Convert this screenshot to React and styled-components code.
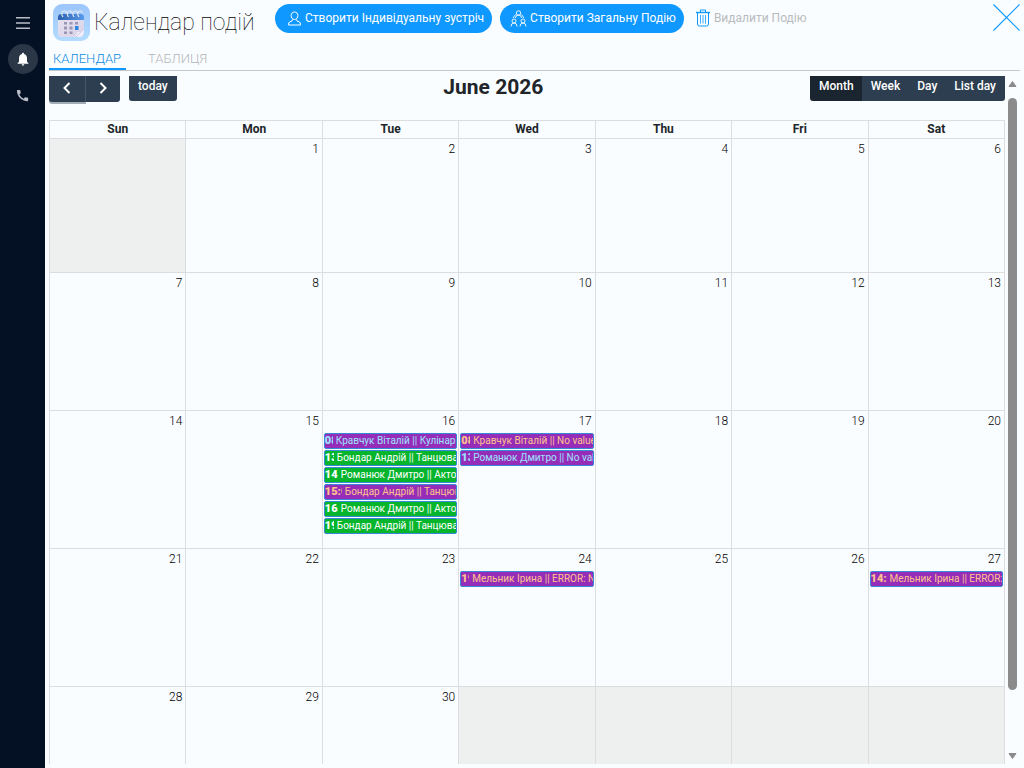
import { useState } from 'react';
import styled, { createGlobalStyle } from 'styled-components';

const GlobalStyle = createGlobalStyle`
  *, *::before, *::after {
    box-sizing: border-box;
  }

  body {
    margin: 0;
    background-color: #fafdff;
    color: #212529;
    font-family: Roboto, 'Liberation Sans', sans-serif;
    font-size: 12px;
  }

  button {
    border: none;
    padding: 0;
    background: none;
    font-family: inherit;
    cursor: pointer;
  }
`;

const Layout = styled.div`
  display: flex;
  height: 100vh;
  overflow: hidden;
`;

const Sidebar = styled.nav`
  display: flex;
  flex-direction: column;
  align-items: center;
  flex: 0 0 45px;
  gap: 6px;
  padding-top: 8px;
  background-color: #041125;
`;

const SideButton = styled.button`
  display: flex;
  align-items: center;
  justify-content: center;
  width: 30px;
  height: 30px;
  border-radius: 50%;
  color: ${({ $active }) => ($active ? '#ffffff' : '#b9bec6')};
  background-color: ${({ $active }) => ($active ? '#2b3646' : 'transparent')};
`;

const Main = styled.main`
  display: flex;
  flex-direction: column;
  flex: 1;
  min-width: 0;
  padding: 0 4px 4px;
`;

const Header = styled.header`
  display: flex;
  align-items: flex-start;
  height: 44px;
  padding: 4px 0 0 4px;
`;

const Brand = styled.div`
  display: flex;
  align-items: center;
  gap: 4px;
  width: 222px;
`;

const Title = styled.h1`
  margin: 0;
  font-size: 23px;
  font-weight: 100;
  line-height: 36px;
  white-space: nowrap;
  color: #000000;
`;

const Actions = styled.div`
  display: flex;
  flex: 1;
  gap: 8px;
`;

const ActionButton = styled.button`
  display: flex;
  align-items: center;
  gap: 3px;
  height: 29px;
  padding: 0 8px 1px 10px;
  border-radius: 15px;
  color: #ffffff;
  background-color: #0f98ff;
  font-size: 12px;
  white-space: nowrap;

  &:disabled {
    gap: 4px;
    padding: 0 4px 1px;
    color: #b8bbbe;
    background-color: transparent;
    cursor: default;
  }
`;

const CloseButton = styled.button`
  display: flex;
  color: #0f98ff;
`;

const TabList = styled.div`
  display: flex;
  gap: 18px;
  height: 27px;
  border-bottom: 1px solid #c4c8cb;
`;

const Tab = styled.button`
  height: 26px;
  padding: 4px 5px 0 4px;
  border-bottom: 2px solid ${({ $active }) => ($active ? '#0f98ff' : 'transparent')};
  color: ${({ $active }) => ($active ? '#0a8be0' : '#b2b6ba')};
  font-size: 13px;
  font-weight: 300;
`;

const ScrollArea = styled.div`
  display: flex;
  flex: 1;
  min-height: 0;
  margin-top: 5px;
  overflow: hidden;
`;

const Calendar = styled.section`
  flex: 1;
  min-width: 0;
`;

const Toolbar = styled.div`
  display: flex;
  align-items: flex-start;
  justify-content: space-between;
  height: 44px;
`;

const ToolbarLeft = styled.div`
  display: flex;
  gap: 9px;
`;

const ButtonGroup = styled.div`
  display: flex;
`;

const ToolButton = styled.button`
  height: 25px;
  padding: 0 9px 5px;
  color: #ffffff;
  background-color: ${({ $active }) => ($active ? '#1a252f' : '#2c3e50')};
  font-size: 12px;
  font-weight: 500;

  &:first-child {
    border-bottom-left-radius: 3px;
  }

  &:last-child {
    border-bottom-right-radius: 3px;
  }

  & + & {
    margin-left: -1px;
  }
`;

const ArrowButton = styled(ToolButton)`
  display: flex;
  align-items: center;
  justify-content: center;
  width: 35px;
  height: 26px;
  padding: 0 0 3px;

  &:first-child {
    width: 37px;
    border-right: 1px solid #46566a;
    box-shadow: 0 2px 0 #a3adb7;
  }

  &:last-child {
    width: 34px;
    margin-left: 0;
  }
`;

const MonthTitle = styled.h2`
  margin: 0;
  font-size: 21px;
  font-weight: 700;
  line-height: 23px;
`;

const MonthTable = styled.table`
  width: 100%;
  border-collapse: collapse;
  table-layout: fixed;
`;

const WeekDay = styled.th`
  height: 18px;
  padding: 0;
  border: 1px solid #dddddd;
  font-size: 12px;
  font-weight: 700;
  line-height: 15px;
`;

const Day = styled.td`
  height: ${({ $short }) => ($short ? 134 : 138)}px;
  padding: 0 1px;
  border: 1px solid #dddddd;
  vertical-align: top;
  background-color: ${({ $outside }) => ($outside ? '#eeefef' : 'transparent')};
`;

const DayNumber = styled.div`
  height: 22px;
  padding: 2px 2px 0;
  color: #000000;
  font-size: 12px;
  font-weight: 300;
  line-height: 16px;
  text-align: right;
`;

const Event = styled.a`
  display: flex;
  height: 16px;
  margin-bottom: 1px;
  overflow: hidden;
  border: 1px solid #3788d8;
  border-radius: 2px;
  color: ${({ $color }) => $color};
  background-color: ${({ $background }) => $background};
  font-size: 10px;
  line-height: 14px;
  text-decoration: none;
  white-space: nowrap;
`;

const EventTime = styled.span`
  flex: 0 0 ${({ $width }) => $width}px;
  margin-right: 3px;
  overflow: hidden;
  font-size: 11px;
  font-weight: 900;
`;

const EventTitle = styled.span`
  flex: 1;
  min-width: 0;
  overflow: hidden;
`;

const ScrollTrack = styled.div`
  display: flex;
  flex-direction: column;
  align-items: center;
  flex: 0 0 15px;
  padding: 4px 0;
  color: #8b8b8b;
`;

const ScrollThumb = styled.div`
  width: 9px;
  height: 87%;
  margin: 10px 0 auto;
  border-radius: 5px;
  background-color: #8b8b8b;
`;

const purple = '#962db8';
const green = '#07b52d';

const events = {
  16: [
    { time: '08:00', width: 8, title: 'Кравчук Віталій || Кулінарія', color: '#9be4ff', background: purple },
    { time: '13:00', width: 9, title: 'Бондар Андрій || Танцювальна', color: '#ffffff', background: green },
    { time: '14:00', width: 13, title: 'Романюк Дмитро || Акторська', color: '#ffffff', background: green },
    { time: '15:00', width: 17, title: 'Бондар Андрій || Танцювальна', color: '#ffc48c', background: purple },
    { time: '16:00', width: 13, title: 'Романюк Дмитро || Акторська', color: '#ffffff', background: green },
    { time: '19:00', width: 9, title: 'Бондар Андрій || Танцювальна', color: '#ffffff', background: green },
  ],
  17: [
    { time: '08:00', width: 9, title: 'Кравчук Віталій || No value', color: '#ffc48c', background: purple },
    { time: '13:00', width: 9, title: 'Романюк Дмитро || No value', color: '#9be4ff', background: purple },
  ],
  24: [
    { time: '19:00', width: 8, title: 'Мельник Ірина || ERROR: No value', color: '#ffc48c', background: purple },
  ],
  27: [
    { time: '14:00', width: 16, title: 'Мельник Ірина || ERROR: No value', color: '#ffc48c', background: purple },
  ],
};

const weekDays = ['Sun', 'Mon', 'Tue', 'Wed', 'Thu', 'Fri', 'Sat'];
const views = ['Month', 'Week', 'Day', 'List day'];

// June 2026 starts on Monday, so the first Sunday cell stays empty
const weeks = [0, 1, 2, 3, 4].map((week) =>
  weekDays.map((_, index) => {
    const day = week * 7 + index;
    return day >= 1 && day <= 30 ? day : null;
  })
);

const MenuIcon = () => (
  <svg width="14" height="12" viewBox="0 0 14 12" stroke="currentColor" strokeWidth="1.5">
    <path d="M0 0.750h14M0 6h14M0 11.250h14" />
  </svg>
);

const BellIcon = () => (
  <svg width="16" height="16" viewBox="0 0 24 24" fill="currentColor">
    <path d="M12 22c1.1 0 2-.9 2-2h-4c0 1.1.9 2 2 2zm6-6v-5c0-3.07-1.63-5.64-4.5-6.32V4c0-.83-.67-1.5-1.5-1.5s-1.5.67-1.5 1.5v.68C7.64 5.36 6 7.92 6 11v5l-2 2v1h16v-1l-2-2z" />
  </svg>
);

const PhoneIcon = () => (
  <svg width="15" height="15" viewBox="0 0 24 24" fill="currentColor">
    <path d="M20.01 15.38c-1.23 0-2.42-.2-3.53-.56-.35-.12-.74-.03-1.01.24l-1.57 1.97c-2.83-1.35-5.48-3.9-6.89-6.83l1.95-1.66c.27-.28.35-.67.24-1.02-.37-1.11-.56-2.3-.56-3.53 0-.54-.45-.99-.99-.99H4.19C3.65 3 3 3.24 3 3.99 3 13.28 10.73 21 20.01 21c.71 0 .99-.63.99-1.18v-3.45c0-.54-.45-.99-.99-.99z" />
  </svg>
);

const LogoIcon = () => (
  <svg width="37" height="37" viewBox="0 0 37 37">
    <defs>
      <linearGradient id="tile" x1="0" y1="0" x2="0" y2="1">
        <stop offset="0" stopColor="#9cc5fb" />
        <stop offset="1" stopColor="#b3dcff" />
      </linearGradient>
      <linearGradient id="band" x1="0" y1="0" x2="1" y2="0">
        <stop offset="0" stopColor="#2c5fae" />
        <stop offset="1" stopColor="#5799ea" />
      </linearGradient>
      <linearGradient id="paper" x1="0" y1="0" x2="1" y2="1">
        <stop offset="0" stopColor="#e6e1f0" />
        <stop offset="1" stopColor="#d9d2e8" />
      </linearGradient>
    </defs>
    <rect width="37" height="37" rx="9" fill="url(#tile)" />
    <path d="M5 14h26v12q0 7-5 7H9q-4 0-4-4z" fill="url(#paper)" />
    <path d="M5 16v-3q0-3 4-3h18q4 0 4 3v3z" fill="url(#band)" />
    <g fill="none" stroke="#dfe5ef" strokeWidth="1.2">
      <path d="M10 13q-2.500-4 0-5.500t3.500 1.500M15.500 13q-2.500-4 0-5.500t3.500 1.500M21 13q-2.500-4 0-5.500t3.500 1.500M26 13q-2.500-4 0-5.500t3 1.500" />
    </g>
    <g fill="#9a97b4">
      <path d="M11 18h3v2.500h-3zM16.500 18h3v2.500h-3zM22 18h3v2.500h-3zM11 22.500h3v3h-3zM16.500 22.500h3v3h-3zM11 27.500h3v2.500h-3zM16.500 27.500h3v2.500h-3z" />
    </g>
    <path d="M22 22h3.500v4H22z" fill="#2f86e0" />
    <path d="M22 33q2-2 2-4.500 4 0 7-3.500v2q0 6-5 6z" fill="#f3effa" />
    <path d="M31 25l-8 8" stroke="#c4bcd8" strokeWidth="0.7" />
  </svg>
);

const PersonIcon = () => (
  <svg width="17" height="15" viewBox="0 0 17 15" fill="none" stroke="currentColor">
    <path d="M9.500 1c2 0 3.400 1.500 3.400 3.500S11.500 8.500 9.500 8.500 6.100 6.500 6.100 4.500 7.500 1 9.500 1z" />
    <path d="M7.500 8.500L7 10l-2.500 1q-1 .5-1 3h12q0-2.500-1-3L12 10l-.5-1.500" />
  </svg>
);

const PeopleIcon = () => (
  <svg width="17" height="17" viewBox="0 0 17 17" fill="none" stroke="currentColor" strokeWidth="0.9">
    <circle cx="8.500" cy="3" r="2.200" />
    <path d="M5.500 8q0-3 3-3t3 3M5.500 4.500L3 8M11.500 4.500L14 8" />
    <circle cx="4" cy="11" r="2" />
    <path d="M1 16.500q0-3.500 3-3.500t3 3.500" />
    <circle cx="13" cy="11" r="2" />
    <path d="M10 16.500q0-3.500 3-3.500t3 3.500" />
  </svg>
);

const TrashIcon = () => (
  <svg width="14" height="18" viewBox="0 0 14 18" fill="none" stroke="#0f98ff">
    <path d="M0 3.500h14" strokeWidth="1.400" />
    <path d="M4.500 3V1h5v2M1.500 4v11q0 2 2 2h7q2 0 2-2V4" />
    <path d="M4.500 6v8.500M7 6v8.500M9.500 6v8.500" strokeWidth="0.8" />
  </svg>
);

const CloseIcon = () => (
  <svg width="27" height="27" viewBox="0 0 27 27" stroke="currentColor" strokeWidth="1.1">
    <path d="M0.500 0.500l26 26M26.500 0.500l-26 26" />
  </svg>
);

const Chevron = ({ d }) => (
  <svg width="8" height="12" viewBox="0 0 8 12" fill="none" stroke="currentColor" strokeWidth="2">
    <path d={d} />
  </svg>
);

const Triangle = ({ d }) => (
  <svg width="9" height="8" viewBox="0 0 9 8" fill="currentColor" stroke="currentColor" strokeLinejoin="round">
    <path d={d} />
  </svg>
);

const App = () => {
  const [tab, setTab] = useState('calendar');
  const [view, setView] = useState('Month');

  return (
    <Layout>
      <GlobalStyle />
      <Sidebar>
        <SideButton type="button" aria-label="Menu"><MenuIcon /></SideButton>
        <SideButton type="button" aria-label="Notifications" $active><BellIcon /></SideButton>
        <SideButton type="button" aria-label="Calls"><PhoneIcon /></SideButton>
      </Sidebar>
      <Main>
        <Header>
          <Brand>
            <LogoIcon />
            <Title>Календар подій</Title>
          </Brand>
          <Actions>
            <ActionButton type="button"><PersonIcon />Створити Індивідуальну зустріч</ActionButton>
            <ActionButton type="button"><PeopleIcon />Створити Загальну Подію</ActionButton>
            <ActionButton type="button" disabled><TrashIcon />Видалити Подію</ActionButton>
          </Actions>
          <CloseButton type="button" aria-label="Close"><CloseIcon /></CloseButton>
        </Header>
        <TabList role="tablist">
          <Tab type="button" role="tab" $active={tab === 'calendar'} onClick={() => setTab('calendar')}>
            КАЛЕНДАР
          </Tab>
          <Tab type="button" role="tab" $active={tab === 'table'} onClick={() => setTab('table')}>
            ТАБЛИЦЯ
          </Tab>
        </TabList>
        <ScrollArea>
          <Calendar>
            <Toolbar>
              <ToolbarLeft>
                <ButtonGroup>
                  <ArrowButton type="button" aria-label="Previous"><Chevron d="M6.500 1L1.500 6l5 5" /></ArrowButton>
                  <ArrowButton type="button" aria-label="Next"><Chevron d="M1.500 1l5 5-5 5" /></ArrowButton>
                </ButtonGroup>
                <ButtonGroup>
                  <ToolButton type="button">today</ToolButton>
                </ButtonGroup>
              </ToolbarLeft>
              <MonthTitle>June 2026</MonthTitle>
              <ButtonGroup>
                {views.map((name) => (
                  <ToolButton key={name} type="button" $active={view === name} onClick={() => setView(name)}>
                    {name}
                  </ToolButton>
                ))}
              </ButtonGroup>
            </Toolbar>
            <MonthTable>
              <thead>
                <tr>
                  {weekDays.map((name) => (
                    <WeekDay key={name}>{name}</WeekDay>
                  ))}
                </tr>
              </thead>
              <tbody>
                {weeks.map((week, row) => (
                  <tr key={row}>
                    {week.map((day, index) => (
                      <Day key={index} $outside={!day} $short={row === 0}>
                        {day && <DayNumber>{day}</DayNumber>}
                        {(events[day] || []).map((event, i) => (
                          <Event key={i} href="#" $color={event.color} $background={event.background}>
                            <EventTime $width={event.width}>{event.time}</EventTime>
                            <EventTitle>{event.title}</EventTitle>
                          </Event>
                        ))}
                      </Day>
                    ))}
                  </tr>
                ))}
              </tbody>
            </MonthTable>
          </Calendar>
          <ScrollTrack>
            <Triangle d="M4.500 1.500L8 6.500H1z" />
            <ScrollThumb />
            <Triangle d="M4.500 6.500L1 1.500h7z" />
          </ScrollTrack>
        </ScrollArea>
      </Main>
    </Layout>
  );
};

export default App;
